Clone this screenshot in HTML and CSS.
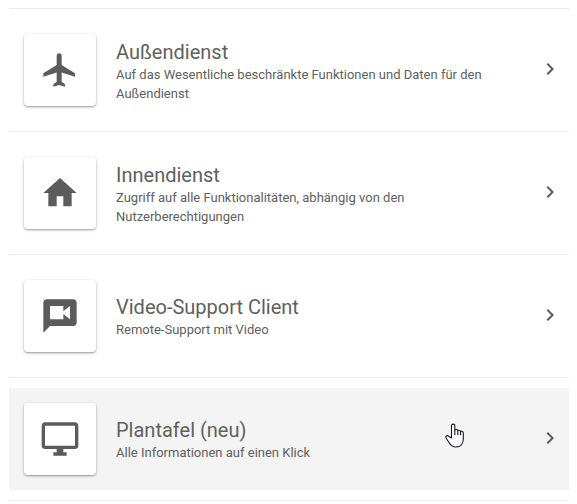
FILE: index.html
```html
<!DOCTYPE html>
<html lang="de">
<head>
<meta charset="utf-8">
<title>Auswahl</title>
<link rel="stylesheet" href="styles.css">
</head>
<body>
<ul class="list">
  <li class="item"><a class="row">
    <span class="tile"><svg viewBox="0 0 24 24"><path d="M21 16v-2l-8-5V3.5c0-.83-.67-1.5-1.5-1.5S10 2.67 10 3.5V9l-8 5v2l8-2.5V19l-2 1.5V22l3.5-1 3.5 1v-1.5L13 19v-5.5l8 2.5z"/></svg></span>
    <span class="text"><span class="title">Außendienst</span><span class="desc">Auf das Wesentliche beschränkte Funktionen und Daten für den Außendienst</span></span>
    <svg class="chevron" viewBox="0 0 24 24"><path d="M10 6L8.59 7.41 13.17 12l-4.58 4.59L10 18l6-6z"/></svg>
  </a></li>
  <li class="item"><a class="row">
    <span class="tile"><svg viewBox="0 0 24 24"><path d="M10 20v-6h4v6h5v-8h3L12 3 2 12h3v8z"/></svg></span>
    <span class="text"><span class="title">Innendienst</span><span class="desc">Zugriff auf alle Funktionalitäten, abhängig von den Nutzerberechtigungen</span></span>
    <svg class="chevron" viewBox="0 0 24 24"><path d="M10 6L8.59 7.41 13.17 12l-4.58 4.59L10 18l6-6z"/></svg>
  </a></li>
  <li class="item"><a class="row">
    <span class="tile"><svg viewBox="0 0 24 24"><path d="M20 2H4c-1.1 0-2 .9-2 2v18l4-4h14c1.1 0 2-.9 2-2V4c0-1.1-.9-2-2-2zm-2 12l-4-3.2V14H6V6h8v3.2L18 6v8z"/></svg></span>
    <span class="text"><span class="title">Video-Support Client</span><span class="desc">Remote-Support mit Video</span></span>
    <svg class="chevron" viewBox="0 0 24 24"><path d="M10 6L8.59 7.41 13.17 12l-4.58 4.59L10 18l6-6z"/></svg>
  </a></li>
  <li class="item"><a class="row row-active">
    <span class="tile"><svg viewBox="0 0 24 24"><path d="M21 2H3c-1.1 0-2 .9-2 2v12c0 1.1.9 2 2 2h7v2H8v2h8v-2h-2v-2h7c1.1 0 2-.9 2-2V4c0-1.1-.9-2-2-2zm0 14H3V4h18v12z"/></svg></span>
    <span class="text"><span class="title">Plantafel (neu)</span><span class="desc">Alle Informationen auf einen Klick</span></span>
    <svg class="chevron" viewBox="0 0 24 24"><path d="M10 6L8.59 7.41 13.17 12l-4.58 4.59L10 18l6-6z"/></svg>
    <svg class="pointer" viewBox="0 0 20 25"><path d="M6.500 15V2.800c0-2.300 3.300-2.300 3.300 0V7c1-.9 2.700-.6 3 .6 1-.6 2.500-.2 2.800.9 1.200-.5 2.700.1 2.700 1.500v6c0 4.800-2.800 8-7.300 8-3.500 0-5.500-1.800-7-4.500L1.200 15.200c-1-2 1-3.200 2.500-2z"/><path d="M9.800 6.500V12M12.800 7.500V12M15.600 8.500V12"/></svg>
  </a></li>
</ul>
</body>
</html>
```
FILE: styles.css
```css
body {
  margin: 0;
  background: #fff;
  color: #606060;
  font-family: Roboto, sans-serif;
  overflow: hidden;
}
.list {
  list-style: none;
  margin: 8px 8px 0 9px;
  padding: 0;
  border-bottom: 1px solid #ebebeb;
}
.item {
  border-top: 1px solid #ebebeb;
  padding: 10px 0;
}
.row {
  position: relative;
  display: flex;
  align-items: center;
  box-sizing: border-box;
  height: 102px;
  padding: 0 7px 0 15px;
}
.row-active { background: #f4f4f4; }
.tile {
  flex: none;
  display: flex;
  align-items: center;
  justify-content: center;
  width: 72px;
  height: 72px;
  border-radius: 4px;
  background: #fff;
  box-shadow: 0 1px 3px rgba(0, 0, 0, .32), 0 1px 1px rgba(0, 0, 0, .12);
}
.tile svg { width: 40px; height: 40px; fill: #5c5c5c; }
.text {
  flex: 1;
  display: flex;
  flex-direction: column;
  margin: 0 40px 0 20px;
  padding-top: 1px;
}
.title { font-size: 20px; line-height: 26px; }
.desc { font-size: 13px; line-height: 19px; }
.chevron {
  flex: none;
  width: 24px;
  height: 24px;
  margin-bottom: 2px;
  fill: #5c5c5c;
}
.pointer {
  position: absolute;
  left: 436px;
  top: 35px;
  width: 20px;
  height: 25px;
  fill: #fff;
  stroke: #15152a;
  stroke-width: 1.1;
  stroke-linejoin: round;
}
```
